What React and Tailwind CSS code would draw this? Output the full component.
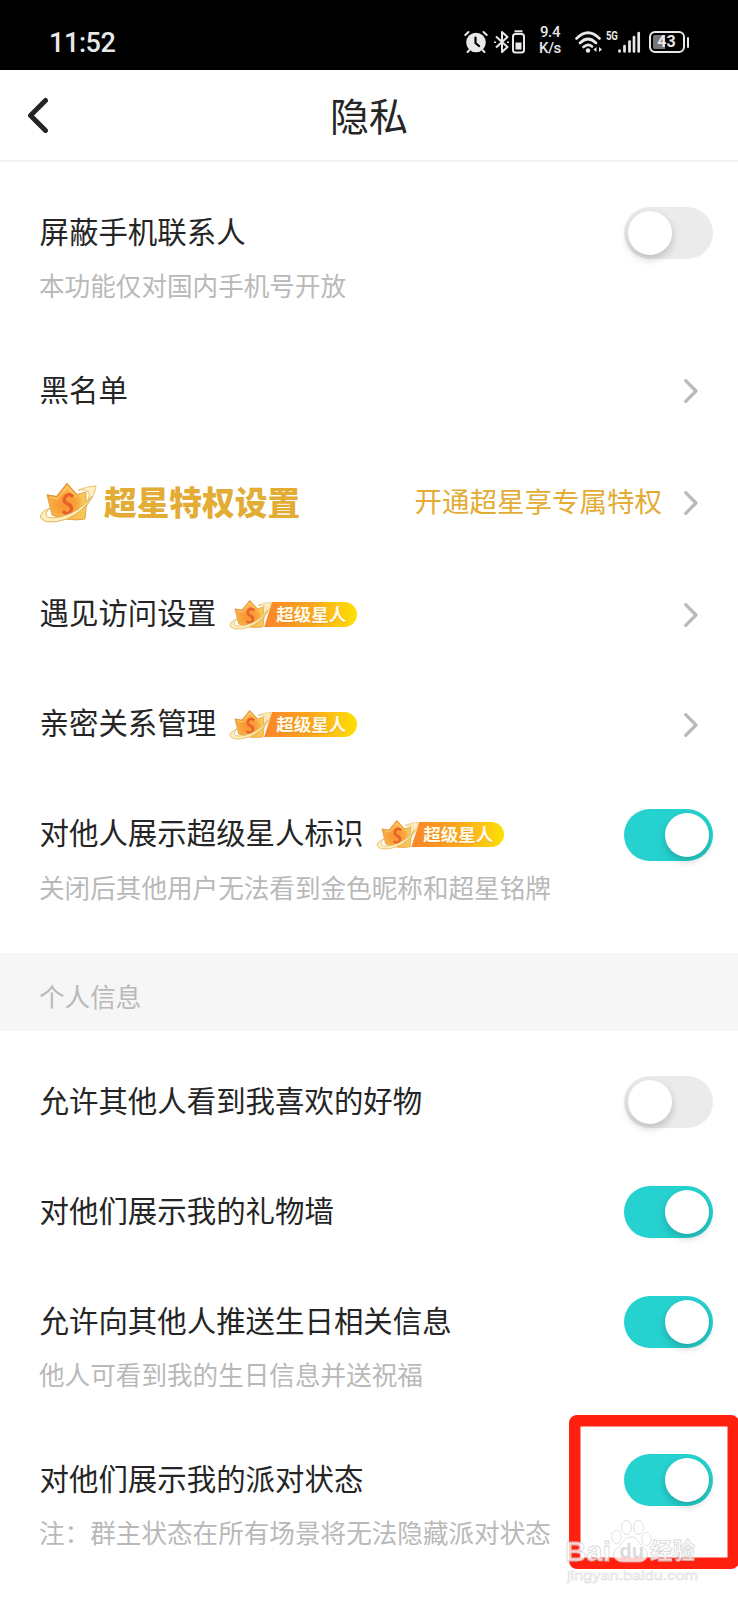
import React, { useState } from 'react';

const Crown = ({ className }) => (
  <svg viewBox="0 0 58 42" className={className}>
    <defs>
      <linearGradient id="crownGold" x1="0" y1="0" x2="1" y2="0">
        <stop offset="0" stopColor="#f3a03c" />
        <stop offset="0.5" stopColor="#fbb548" />
        <stop offset="1" stopColor="#f5cb5c" />
      </linearGradient>
      <radialGradient id="crownCore" cx="0.5" cy="0.6" r="0.5">
        <stop offset="0" stopColor="#f98e34" />
        <stop offset="0.6" stopColor="#faa038" stopOpacity="0.8" />
        <stop offset="1" stopColor="#fbc65a" stopOpacity="0" />
      </radialGradient>
    </defs>
    <path d="M39 8 Q49 4 57 4 Q56 14 46 26 Q51 15 50 10 Q46 7 39 8Z" fill="#fdf0c0" stroke="#e2b85c" strokeWidth="0.8" />
    <path d="M8 13 L17.5 14.5 L28 1.5 L38 12.5 L47 10 Q48 24 46 37 Q30 40 13 33 Z" fill="url(#crownGold)" stroke="#e0a03c" strokeWidth="0.9" strokeLinejoin="round" />
    <path d="M8 13 L17.5 14.5 L28 1.5 L38 12.5 L47 10 L40 35 Q24 37 13 33 Z" fill="url(#crownCore)" />
    <path d="M8 13 L17.5 14.5 L28 1.5 L38 12.5" fill="none" stroke="#e88a30" strokeWidth="1" />
    <path d="M11 15 L18.5 17 L28 5 L36.5 15" fill="none" stroke="#fdd98a" strokeWidth="0.9" />
    <path d="M34 15 Q31 10.5 27 14 Q23 19 28 21.5 Q34 24 32 29 Q28 34 24 29" fill="none" stroke="#e8602a" strokeWidth="3.4" />
    <path d="M11 26 Q-1 31 2 36.5 Q8 43 26 37.5 Q44 31 53 14 Q40 30 23 34.5 Q9 37.5 7 33.5 Q6 30.5 11 26Z" fill="#fdeebc" stroke="#deae50" strokeWidth="0.9" />
  </svg>
);

const Badge = () => (
  <span className="relative top-px ml-[13px] flex h-8 w-[128px] items-center">
    <span className="ml-[34px] flex h-[25px] w-[94px] items-center rounded-r-full bg-linear-to-r from-[#fb8428] via-[#fba51d] to-[#fde000] pl-[13px] font-['Noto_Sans_CJK_SC',sans-serif] text-[17.5px] leading-none font-bold text-[#fffbe8] [clip-path:polygon(9px_0,100%_0,100%_100%,1px_100%)] [text-shadow:0_1px_1px_#d9862088]">
      <span className="-mt-0.5">超级星人</span>
    </span>
    <Crown className="absolute top-0 left-0 h-8 w-[43px]" />
  </span>
);

const Toggle = ({ on, onClick }) => (
  <button
    type="button"
    onClick={onClick}
    className={`flex h-[52px] w-[89px] shrink-0 items-center rounded-full px-1 ${on ? 'justify-end bg-[#26d2cf]' : 'justify-start bg-[#ebebeb]'}`}
  >
    <span className="size-[44px] rounded-full bg-white shadow-[0_4px_8px_rgba(0,0,0,0.2)]" />
  </button>
);

const Chevron = () => (
  <svg viewBox="0 0 14 24" className="mr-[15px] h-6 w-[14px] shrink-0">
    <path d="M1.7 1.7 L12 12 L1.7 22.3" fill="none" stroke="#b9b9b9" strokeWidth="3.2" strokeLinecap="round" strokeLinejoin="round" />
  </svg>
);

const Row = ({ title, note, badge, toggle }) => {
  const [on, setOn] = useState(toggle === 'on');
  return (
    <div className={note ? 'h-[158px]' : 'h-[110px]'}>
      <div className="flex h-[110px] items-center justify-between pr-[25px] pl-[39.5px]">
        <div className="-mt-[3px] flex items-center text-[29.45px] leading-none whitespace-nowrap text-[#252525]">
          <span className={badge ? '-mt-1' : '-mt-px mb-px'}>{title}</span>
          {badge && <Badge />}
        </div>
        {toggle ? <Toggle on={on} onClick={() => setOn(!on)} /> : <Chevron />}
      </div>
      {note && <p className="-mt-4 pl-[39px] text-[25.6px] leading-[26px] whitespace-nowrap text-[#b9b9b9]">{note}</p>}
    </div>
  );
};

const StatusBar = () => (
  <div className="flex h-[70px] items-center justify-between bg-black pt-[14px] pr-[49px] pl-[49px] font-['Roboto',sans-serif] text-[#e8e8e8]">
    <span className="mt-0.5 text-[27px] leading-none font-medium tracking-[-0.4px]">11:52</span>
    <div className="flex items-center">
      {/* alarm */}
      <svg viewBox="0 0 24 24" className="h-6 w-6" fill="none" stroke="#e8e8e8" strokeLinecap="round">
        <circle cx="12" cy="12.5" r="9.8" fill="#e8e8e8" stroke="none" />
        <path d="M1.3 5 L4.5 2 M22.7 5 L19.5 2 M5 20.5 L3.5 22 M19 20.5 L20.5 22" strokeWidth="2" />
        <path d="M11.5 7.5 V13 L15 16" stroke="#000" strokeWidth="2.2" />
      </svg>
      {/* bluetooth + device battery */}
      <svg viewBox="0 0 32 24" className="ml-1.5 h-6 w-8" fill="none" stroke="#e8e8e8" strokeWidth="2">
        <path d="M2 6.5 L13.5 17 L8 22 V2 L13.5 7 L2 17.5" strokeLinejoin="round" />
        <path d="M1 11.5 v1.5 M14 11.5 v1.5" />
        <rect x="19" y="4" width="11" height="18.5" rx="2.5" />
        <path d="M20.5 1.3 h8" />
        <rect x="21.5" y="12.5" width="6" height="7" fill="#e8e8e8" stroke="none" />
      </svg>
      <div className="-mt-1 ml-3 flex w-[25px] flex-col items-center text-[15px] leading-4 font-medium">
        <span className="tracking-tight">9.4</span>
        <span className="tracking-tight">K/s</span>
      </div>
      {/* wifi */}
      <svg viewBox="0 0 28 24" className="ml-3 h-6 w-7" fill="none" stroke="#e8e8e8" strokeWidth="2.6" strokeLinecap="round">
        <path d="M1.5 8.5 Q13 -3 24.5 8.5 M5 13 Q13 5 21 13 M8.5 17 Q13 13 17 16.5" />
        <circle cx="13" cy="20.5" r="2.2" fill="#e8e8e8" stroke="none" />
        <path d="M21.5 17 v5 l-3-2.5z M24 17 v5 l3-2.5z" fill="#e8e8e8" stroke="none" />
      </svg>
      <span className="mb-3 ml-[3px] w-[11px] origin-left scale-x-80 text-[12px] leading-none font-bold tracking-tight">5G</span>
      <svg viewBox="0 0 24 24" className="h-6 w-6" fill="none" stroke="#e8e8e8" strokeWidth="2.7" strokeLinecap="round">
        <path d="M2.5 20.5 v1 M7.5 16 v5.5 M12.5 11.5 v10 M17 7 v14.5 M21.7 3 v18.5" />
      </svg>
      <div className="ml-2 flex h-[22px] w-9 items-center justify-center rounded-[6px] border-2 border-[#e8e8e8] bg-linear-to-r from-[#777] from-43% to-black to-43% text-[16px] leading-none font-bold shadow-[inset_0_0_0_2px_#000]">
        43
      </div>
      <span className="ml-0.5 h-[11px] w-[2.5px] rounded-full bg-[#e8e8e8]" />
    </div>
  </div>
);

const Watermark = () => (
  <div className="absolute top-[1519px] left-[566px] w-[140px] text-white opacity-80">
    <svg viewBox="0 0 132 70" className="h-[70px] w-[132px] overflow-visible" stroke="#d0d0d0" strokeWidth="0.8" fill="#fff">
      <g>
        <ellipse cx="50.5" cy="18" rx="4.8" ry="6.6" />
        <ellipse cx="60.5" cy="8.5" rx="5" ry="7" />
        <ellipse cx="72.5" cy="8.5" rx="5" ry="7" />
        <ellipse cx="80.5" cy="20" rx="4.8" ry="6.6" />
        <path d="M65 18 C58 18 56 26 50 30 C45 35 48 43 57 43 H73 C81 43 84 35 79 30 C73 26 72 18 65 18Z" />
      </g>
      <g fontFamily="Liberation Sans, sans-serif" fontWeight="bold">
        <text x="-1" y="41.5" fontSize="28.5" textLength="46" lengthAdjust="spacingAndGlyphs">Bai</text>
        <text x="53.5" y="39" fontSize="20" fill="#d4d4d4" stroke="none">du</text>
      </g>
      <text x="84" y="40" fontSize="22.5" fontWeight="bold" fontFamily="Noto Sans CJK SC, sans-serif">经验</text>
      <text x="1" y="61" fontSize="13.5" strokeWidth="0.5" textLength="131" lengthAdjust="spacingAndGlyphs" fontFamily="Liberation Sans, sans-serif">jingyan.baidu.com</text>
    </svg>
  </div>
);

const App = () => {
  return (
    <div className="relative h-[1600px] w-[738px] overflow-hidden bg-white font-['Noto_Sans_CJK_SC',sans-serif]">
      <StatusBar />

      {/* Header */}
      <header className="grid h-[92px] grid-cols-[1fr_auto_1fr] items-center border-b-2 border-[#f3f3f3] px-[27px]">
        <svg viewBox="0 0 22 36" className="h-9 w-[22px]">
          <path d="M18.5 3.5 L3.5 18.5 L18.5 33.5" fill="none" stroke="#252525" strokeWidth="5" strokeLinecap="round" strokeLinejoin="round" />
        </svg>
        <h1 className="-mt-0.5 text-[39px] leading-none text-[#252525]">隐私</h1>
      </header>

      <section className="pt-4">
        <Row title="屏蔽手机联系人" note="本功能仅对国内手机号开放" toggle="off" />
        <Row title="黑名单" />
        <div className="flex h-[114px] items-center justify-between pr-[25px] pl-[39px]">
          <div className="flex items-center">
            <Crown className="h-[42px] w-[58px]" />
            <span className="-mt-[3px] ml-[7px] text-[32.7px] leading-none font-black text-[#e2ac35]">超星特权设置</span>
          </div>
          <div className="flex items-center">
            <span className="-mt-[5px] mr-[22px] text-[27.5px] leading-none text-[#e2ac35]">开通超星享专属特权</span>
            <Chevron />
          </div>
        </div>
        <Row title="遇见访问设置" badge />
        <Row title="亲密关系管理" badge />
        <Row title="对他人展示超级星人标识" note="关闭后其他用户无法看到金色昵称和超星铭牌" badge toggle="on" />
      </section>

      <div className="mt-[15px] flex h-[78px] items-center bg-[#f6f6f6] pt-2.5 pl-[39px] text-[25.6px] leading-none text-[#b9b9b9]">
        <span className="-mt-0.5">个人信息</span>
      </div>

      <section className="pt-4">
        <Row title="允许其他人看到我喜欢的好物" toggle="off" />
        <Row title="对他们展示我的礼物墙" toggle="on" />
        <Row title="允许向其他人推送生日相关信息" note="他人可看到我的生日信息并送祝福" toggle="on" />
        <Row title="对他们展示我的派对状态" note="注：群主状态在所有场景将无法隐藏派对状态" toggle="on" />
      </section>

      {/* Highlight frame */}
      <div className="pointer-events-none absolute top-[1415px] left-[569px] h-[154px] w-[170px] rounded-lg bg-transparent shadow-[inset_0_0_0_11.5px_#ff2010]" />
      <Watermark />
    </div>
  );
};

export default App;
